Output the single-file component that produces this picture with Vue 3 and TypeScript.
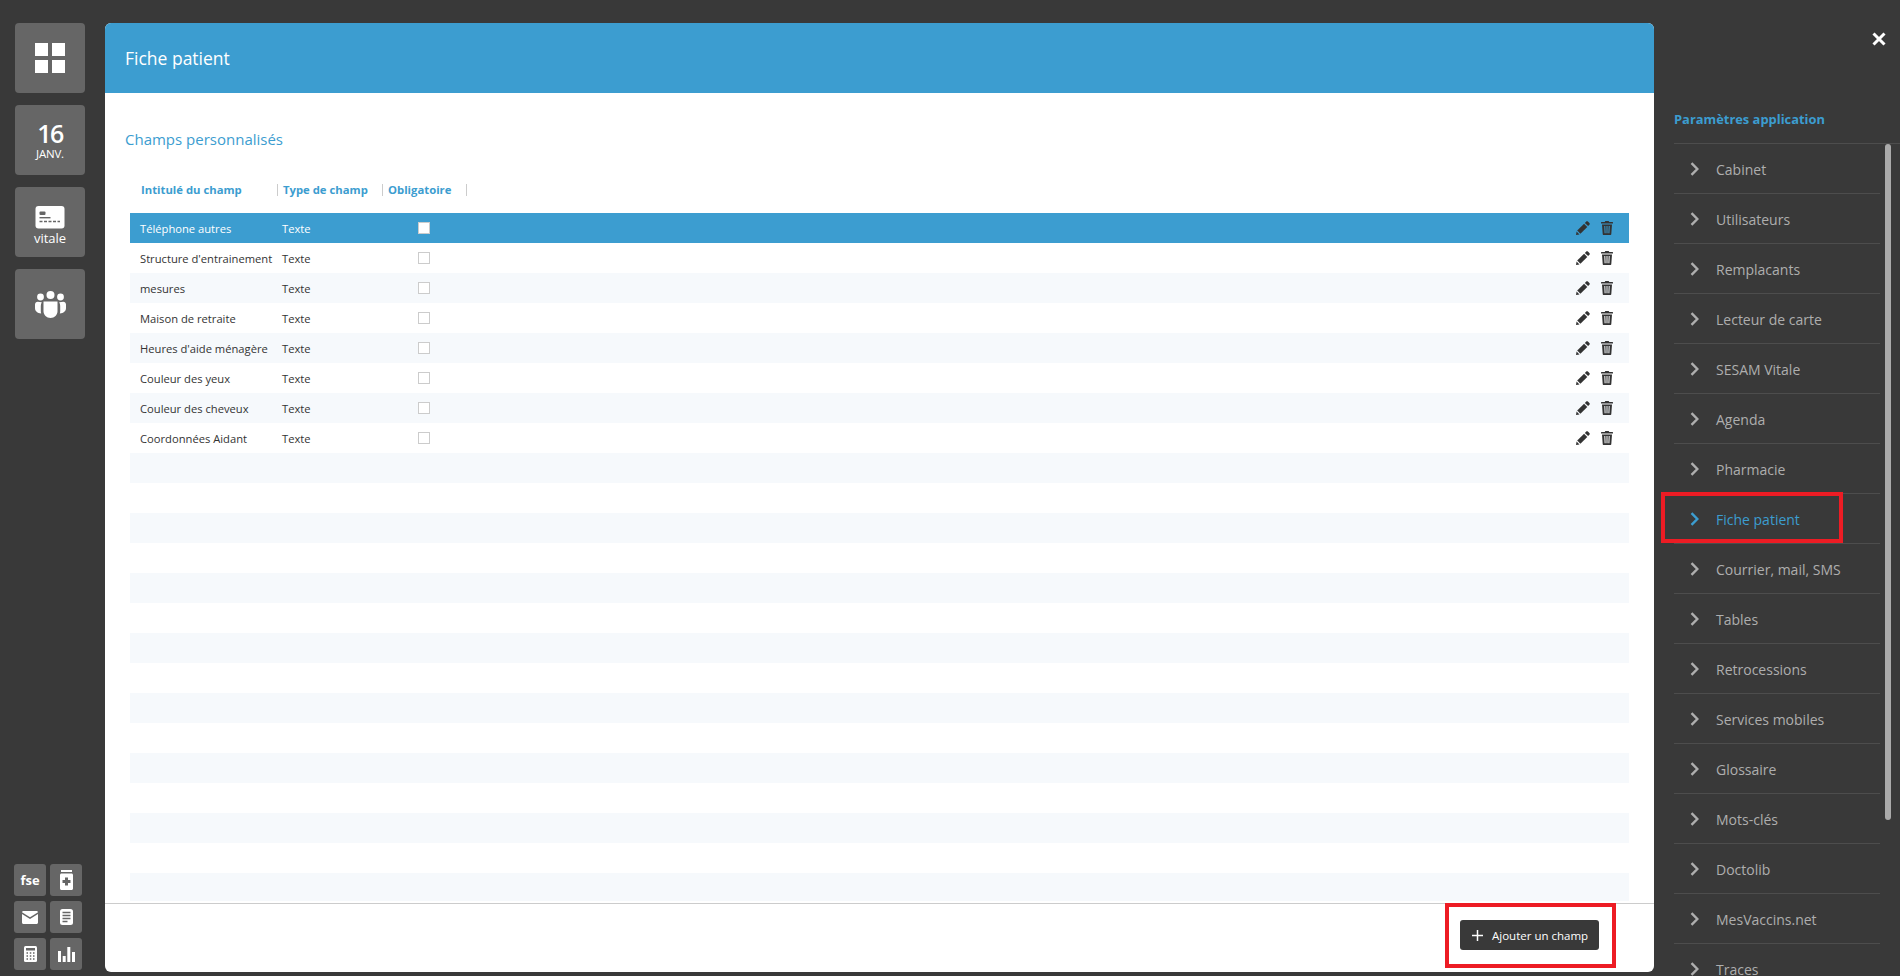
<script setup lang="ts">
const rows = [
  { name: 'Téléphone autres', type: 'Texte' },
  { name: "Structure d'entrainement", type: 'Texte' },
  { name: 'mesures', type: 'Texte' },
  { name: 'Maison de retraite', type: 'Texte' },
  { name: "Heures d'aide ménagère", type: 'Texte' },
  { name: 'Couleur des yeux', type: 'Texte' },
  { name: 'Couleur des cheveux', type: 'Texte' },
  { name: 'Coordonnées Aidant', type: 'Texte' },
]
const emptyRows = Array.from({ length: 15 }, (_, i) => i)
const navItems = [
  'Cabinet', 'Utilisateurs', 'Remplacants', 'Lecteur de carte', 'SESAM Vitale', 'Agenda', 'Pharmacie',
  'Fiche patient', 'Courrier, mail, SMS', 'Tables', 'Retrocessions', 'Services mobiles', 'Glossaire',
  'Mots-clés', 'Doctolib', 'MesVaccins.net', 'Traces',
]
</script>

<template>
  <div class="screen">
    <aside class="rail">
      <div class="rail-top">
        <div class="tile">
          <div class="grid-icon"><i></i><i></i><i></i><i></i></div>
        </div>
        <div class="tile date">
          <span class="day">16</span>
          <span class="month">JANV.</span>
        </div>
        <div class="tile vitale">
          <svg width="30" height="23" viewBox="0 0 30 23">
            <rect x="0.5" width="29" height="22.5" rx="3" fill="#fff" />
            <rect x="4.5" y="5.5" width="6" height="3.5" rx="1" fill="#666" />
            <rect x="4.5" y="11" width="11" height="1.4" fill="#666" />
            <path d="M4.5 15.5h3M9 15.5h3M13.5 15.5h3M18 15.5h3M22.5 15.5h2.5" stroke="#666" stroke-width="1.4" />
          </svg>
          <span class="vitale-label">vitale</span>
        </div>
        <div class="tile">
          <svg width="31" height="27" viewBox="0 0 31 27" fill="#fff">
            <circle cx="5.5" cy="6" r="3.4" />
            <circle cx="15.5" cy="4" r="4" />
            <circle cx="25.5" cy="6" r="3.4" />
            <path d="M8.5 10.5h14v9.5c0 4-3 7-7 7s-7-3-7-7z" />
            <path d="M6.8 11.2c-.7 1.2-1 2.4-1 3.8v5c0 .9.1 1.8.4 2.6C2.4 22.2 0 20.2 0 17v-3.5c0-1.5 1.2-2.7 2.7-2.7z" />
            <path d="M24.2 11.2c.7 1.2 1 2.4 1 3.8v5c0 .9-.1 1.8-.4 2.6C28.6 22.2 31 20.2 31 17v-3.5c0-1.5-1.2-2.7-2.7-2.7z" />
          </svg>
        </div>
      </div>
      <div class="rail-bottom">
        <div class="mini fse">fse</div>
        <div class="mini">
          <svg width="13" height="20" viewBox="0 0 13 20" fill="#fff">
            <rect x="1" width="11" height="2" />
            <path d="M1.5 3.5h10c.8 0 1.5.7 1.5 1.5v13.5c0 .8-.7 1.5-1.5 1.5h-10C.7 20 0 19.3 0 18.5V5c0-.8.7-1.5 1.5-1.5z" />
            <path d="M5 7.5h3V10h2.5v3H8v2.5H5V13H2.5v-3H5z" fill="#666" />
          </svg>
        </div>
        <div class="mini">
          <svg width="16" height="13" viewBox="0 0 16 13" fill="#fff">
            <path d="M1.5 0h13c.7 0 1.3.5 1.500 1.200L8 6.300 0 1.200C.2.5.8 0 1.500 0z" />
            <path d="M0 3l8 5 8-5v8.500c0 .8-.7 1.500-1.500 1.500h-13C.7 13 0 12.300 0 11.500z" />
          </svg>
        </div>
        <div class="mini">
          <svg width="13" height="16" viewBox="0 0 13 16">
            <rect width="13" height="16" rx="2.5" fill="#fff" />
            <path d="M2.5 3.5h8M2.5 6.5h8M2.5 9.5h8M2.5 12.5h5" stroke="#666" stroke-width="1.3" />
          </svg>
        </div>
        <div class="mini">
          <svg width="13" height="16" viewBox="0 0 13 16">
            <rect width="13" height="16" rx="1.5" fill="#fff" />
            <rect x="2" y="2" width="9" height="2.5" fill="#666" />
            <path d="M2.5 7h1.5M5.8 7h1.5M9 7h1.5M2.5 10h1.5M5.8 10h1.5M9 10h1.5M2.5 13h1.5M5.8 13h1.5M9 13h1.5" stroke="#666" stroke-width="1.5" />
          </svg>
        </div>
        <div class="mini">
          <svg width="17" height="15" viewBox="0 0 17 15" fill="#fff">
            <rect y="4" width="3" height="11" />
            <rect x="4.7" y="9" width="3" height="6" />
            <rect x="9.3" width="3" height="15" />
            <rect x="14" y="5" width="3" height="10" />
          </svg>
        </div>
      </div>
    </aside>

    <main class="modal">
      <header class="modal-head">Fiche patient</header>
      <section class="modal-body">
        <h2 class="section-title">Champs personnalisés</h2>
        <div class="table-head">
          <span class="th th-name">Intitulé du champ</span>
          <span class="th th-type">Type de champ</span>
          <span class="th th-req">Obligatoire</span>
        </div>
        <div class="table-rows">
          <div v-for="(row, i) in rows" :key="row.name" class="row" :class="{ selected: i === 0 }">
            <span class="cell-name">{{ row.name }}</span>
            <span class="cell-type">{{ row.type }}</span>
            <span class="cell-check"><i class="check"></i></span>
            <span class="cell-actions">
              <svg width="14" height="14" viewBox="0 0 14 14" fill="#333">
                <path d="M10.2.6c.5-.5 1.2-.5 1.7 0l1.500 1.500c.5.5.5 1.200 0 1.700l-1.300 1.300-3.200-3.200z" />
                <path d="M8.1 2.7l3.2 3.2-6.900 6.900-3.200-3.200z" />
                <path d="M.6 10.500l2.900 2.900-3.500.6z" />
              </svg>
              <svg width="12" height="14" viewBox="0 0 12 14" fill="#333">
                <path d="M4.3 0h3.400l.5 1H11.500c.3 0 .5.2.5.5V2.500H0v-1C0 1.200.2 1 .5 1H3.800z" />
                <path fill-rule="evenodd" d="M1 3.500h10l-.7 9.500c0 .6-.5 1-1 1H2.700c-.5 0-1-.4-1-1zM3.300 5l.3 7.200h1L4.300 5zM5.500 5v7.200h1V5zM7.700 5l-.3 7.200h1L8.700 5z" />
              </svg>
            </span>
          </div>
          <div v-for="n in emptyRows" :key="n" class="row"></div>
        </div>
      </section>
      <footer class="modal-foot">
        <button class="add-btn" type="button">
          <svg width="11" height="11" viewBox="0 0 11 11"><path d="M5.5 0v11M0 5.5h11" stroke="#fff" stroke-width="1.5" /></svg>
          <span>Ajouter un champ</span>
        </button>
        <span class="callout callout-btn"></span>
      </footer>
    </main>

    <aside class="panel">
      <div class="close-row">
        <svg width="14" height="14" viewBox="0 0 14 14"><path d="M1.5 1.5l11 11M12.5 1.5l-11 11" stroke="#fff" stroke-width="3" /></svg>
      </div>
      <div class="panel-title">Paramètres application</div>
      <nav class="nav">
        <div v-for="item in navItems" :key="item" class="nav-item" :class="{ active: item === 'Fiche patient' }">
          <svg class="chev" width="9" height="14" viewBox="0 0 9 14" fill="none"><path d="M1.5 1.2L7.3 7l-5.800 5.800" stroke-width="2.4" /></svg>
          <span>{{ item }}</span>
          <span v-if="item === 'Fiche patient'" class="callout callout-nav"></span>
        </div>
      </nav>
      <span class="scrollbar"></span>
    </aside>
  </div>
</template>

<style>
html, body { margin: 0; background: #393939; overflow: hidden; }
</style>

<style scoped>
* { box-sizing: border-box; }
.screen {
  display: flex;
  width: 1900px;
  height: 976px;
  overflow: hidden;
  background: #393939;
  font-family: "Open Sans", "Noto Sans", sans-serif;
  color: #333;
}
.rail {
  width: 105px;
  flex: none;
  display: flex;
  flex-direction: column;
  justify-content: space-between;
  padding: 23px 0 6px 14px;
}
.rail-top { display: flex; flex-direction: column; gap: 12px; padding-left: 1px; }
.tile {
  width: 70px;
  height: 70px;
  border-radius: 4px;
  background: #666;
  color: #fff;
  display: flex;
  flex-direction: column;
  align-items: center;
  justify-content: center;
}
.grid-icon { display: grid; grid-template-columns: 13px 13px; grid-auto-rows: 13px; gap: 4px; }
.grid-icon i { background: #fff; display: block; }
.date { line-height: 1; }
.day { font-size: 25px; font-weight: 600; letter-spacing: -1.5px; }
.month { font-size: 11.5px; margin-top: 2.5px; letter-spacing: -0.2px; }
.vitale { gap: 1px; padding-top: 8px; }
.vitale-label { font-size: 13px; line-height: 16px; }
.rail-bottom { display: grid; grid-template-columns: 32px 32px; grid-auto-rows: 32px; gap: 5px 4px; }
.mini {
  border-radius: 3px;
  background: #666;
  display: flex;
  align-items: center;
  justify-content: center;
  color: #fff;
}
.fse { font-size: 13px; font-weight: 700; }
.modal {
  width: 1549px;
  height: 949px;
  margin-top: 23px;
  flex: none;
  background: #fff;
  border-radius: 6px;
  overflow: hidden;
  display: flex;
  flex-direction: column;
}
.modal-head {
  height: 70px;
  flex: none;
  background: #3c9dd0;
  color: #fff;
  font-size: 17.5px;
  line-height: 71px;
  padding-left: 20px;
}
.modal-body { flex: 1; min-height: 0; overflow: hidden; display: flex; flex-direction: column; padding: 0 25px 0; }
.section-title {
  margin: 35px 0 0 -5px;
  font-size: 15px;
  line-height: 22px;
  font-weight: 400;
  color: #3c9dd0;
}
.table-head {
  display: flex;
  align-items: center;
  height: 12px;
  margin-top: 34px;
  font-size: 11.3px;
  font-weight: 700;
  color: #3c9dd0;
}
.th { display: block; white-space: nowrap; border-right: 1px solid #ccc; height: 12px; line-height: 12px; }
.th-name { width: 148px; padding-left: 11px; }
.th-type { width: 105px; padding-left: 5px; }
.th-req { width: 84px; padding-left: 5px; }
.table-rows { margin-top: 17px; flex: 1; min-height: 0; overflow: hidden; }
.row {
  display: flex;
  align-items: center;
  height: 30px;
  font-size: 11.2px;
  color: #333;
}
.row:nth-child(odd) { background: #f6f9fc; }
.row.selected { background: #3c9dd0; color: #fff; }
.cell-name { width: 152px; padding-left: 10px; white-space: nowrap; }
.cell-type { width: 136px; }
.check { display: block; width: 12px; height: 12px; border: 1px solid #ccc; background: #fff; }
.cell-check { width: 12px; display: flex; }
.cell-actions { margin-left: auto; margin-right: 16px; display: flex; align-items: center; gap: 11px; }
.modal-foot {
  position: relative;
  height: 69px;
  flex: none;
  border-top: 1px solid #ccc;
  margin-top: 2px;
  display: flex;
  justify-content: flex-end;
  padding: 16px 55px 0 0;
}
.add-btn {
  width: 139px;
  height: 30px;
  border: 0;
  border-radius: 3px;
  background: #393939;
  color: #fff;
  font: inherit;
  font-size: 11.5px;
  display: flex;
  align-items: center;
  gap: 9px;
  padding: 0 0 0 12px;
  white-space: nowrap;
}
.callout { position: absolute; border: 4px solid #ed1c24; pointer-events: none; }
.callout-btn { left: 1340px; top: -1px; width: 171px; height: 65px; }
.panel { position: relative; flex: 1; min-width: 0; padding: 0 0 0 20px; color: #bbb; }
.close-row { height: 96px; display: flex; justify-content: flex-end; padding: 32px 14px 0 0; }
.panel-title {
  height: 48px;
  padding-top: 14px;
  font-size: 12.9px;
  line-height: 18px;
  font-weight: 700;
  color: #3c9dd0;
  border-bottom: 1px solid #4d4d4d;
  white-space: nowrap;
}
.nav { width: 206px; }
.nav-item {
  position: relative;
  display: flex;
  align-items: center;
  height: 50px;
  padding: 1px 0 0 16px;
  gap: 17px;
  font-size: 14px;
  color: #aeaeae;
  border-bottom: 1px solid #4d4d4d;
  white-space: nowrap;
}
.chev { stroke: #aeaeae; flex: none; }
.nav-item.active { color: #3c9dd0; }
.nav-item.active .chev { stroke: #3c9dd0; }
.callout-nav { left: -13px; top: -2px; width: 182px; height: 51px; }
.scrollbar {
  position: absolute;
  left: 231px;
  top: 144px;
  width: 6px;
  height: 676px;
  background: #aaa;
  border-radius: 3px;
}
</style>
